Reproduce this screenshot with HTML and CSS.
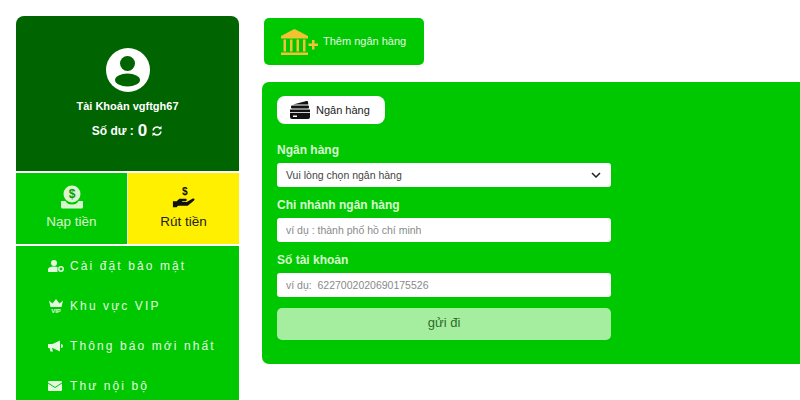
FILE: index.html
```html
<!DOCTYPE html>
<html lang="vi">
<head>
    <meta charset="UTF-8">
    <meta name="viewport" content="width=device-width, initial-scale=1.0">
    <title>Ngân hàng</title>
    <link rel="stylesheet" href="styles.css">
</head>
<body>
    <div class="page">
        <aside class="sidebar">
            <div class="profile">
                <svg class="avatar" viewBox="0 0 44 44">
                    <circle cx="22" cy="22" r="22" fill="#fff"/>
                    <circle cx="21.500" cy="15.500" r="7.500" fill="#006400"/>
                    <ellipse cx="21.500" cy="32" rx="12.500" ry="6.500" fill="#006400"/>
                </svg>
                <div class="account">Tài Khoản vgftgh67</div>
                <div class="balance">
                    <span>Số dư :</span>
                    <span class="amount">0</span>
                    <svg class="refresh" viewBox="0 0 12 12">
                        <path d="M2 5.500C2.500 3.300 4.200 2 6.200 2c1.200 0 2.200.5 3 1.300M10 6.500C9.500 8.700 7.800 10 5.800 10c-1.200 0-2.200-.5-3-1.300" fill="none" stroke="#fff" stroke-width="1.500"/>
                        <path d="M10.500 .8v3.400H7.100zM1.500 11.200V7.800h3.400z" fill="#fff"/>
                    </svg>
                </div>
            </div>
            <div class="tiles">
                <a href="#none" class="tile tile-in">
                    <svg class="tile-icon" viewBox="0 0 24 24">
                        <circle cx="12" cy="9" r="8.500" fill="#d8f5d0"/>
                        <text x="12" y="13" class="coin">$</text>
                        <path d="M1 16h4.500c1 2.500 3.500 3.500 6.500 3.500s5.500-1 6.500-3.500H23v6a1.500 1.500 0 0 1-1.500 1.500h-19A1.500 1.500 0 0 1 1 22z" fill="#d8f5d0"/>
                    </svg>
                    <span>Nạp tiền</span>
                </a>
                <a href="#none" class="tile tile-out">
                    <svg class="tile-icon" viewBox="0 0 26 24">
                        <text x="14" y="9.500" class="dollar">$</text>
                        <path d="M1 16.500h4l3-2.500h6.500c1 0 1.500.6 1.500 1.300s-.6 1.200-1.500 1.200h-3.500v.8h5l6-3.300c1-.5 2-.3 2.300.3.300.6 0 1.200-.7 1.700L17 21.500H6.500L5 23H1z" fill="#111"/>
                    </svg>
                    <span>Rút tiền</span>
                </a>
            </div>
            <ul class="menu">
                <li>
                    <svg class="menu-icon" viewBox="0 0 16 12">
                        <circle cx="6" cy="3" r="3" fill="#e4f8e0"/>
                        <path d="M0 12V9.500C0 7.500 2 6.500 6 6.500c1.500 0 2.700.2 3.500.5v5z" fill="#e4f8e0"/>
                        <circle cx="13" cy="9" r="2.200" fill="none" stroke="#e4f8e0" stroke-width="1.500"/>
                    </svg>
                    <span>Cài đặt bảo mật</span>
                </li>
                <li>
                    <svg class="menu-icon" viewBox="0 0 16 14">
                        <path d="M1 1.500l3.500 3L8 0l3.500 4.500 3.500-3L13.500 8h-11z" fill="#e4f8e0"/>
                        <text x="8" y="14" class="vip">VIP</text>
                    </svg>
                    <span>Khu vực VIP</span>
                </li>
                <li>
                    <svg class="menu-icon" viewBox="0 0 16 12">
                        <path d="M0 4h4.500L12 .5v11L4.500 8H4l1 3.500H2.500L1.500 8H0z" fill="#e4f8e0"/>
                        <path d="M13 4a2 2 0 0 1 0 4z" fill="#e4f8e0"/>
                    </svg>
                    <span>Thông báo mới nhất</span>
                </li>
                <li>
                    <svg class="menu-icon" viewBox="0 0 16 12">
                        <rect y="1" width="14" height="10" rx="1" fill="#e4f8e0"/>
                        <path d="M0 3l7 4.500L14 3" fill="none" stroke="#00c800" stroke-width="1"/>
                    </svg>
                    <span>Thư nội bộ</span>
                </li>
            </ul>
        </aside>

        <main class="content">
            <a href="#none" class="add-bank">
                <svg class="bank-icon" viewBox="0 0 37 26">
                    <path d="M13.500 0L27 7v2.500H0V7z" fill="#f2c230"/>
                    <path d="M2.500 10.500h2.500v12H2.500zM9 10.500h2.500v12H9zM15.500 10.500H18v12h-2.500zM22 10.500h2.500v12H22zM0 23.500h27V26H0z" fill="#f2c230"/>
                    <path d="M27.500 14.500H37v2.500h-9.500zM31 11h2.500v9.500H31z" fill="#f2c230"/>
                </svg>
                <span class="add-text">Thêm ngân hàng</span>
            </a>

            <section class="panel">
                <div class="tab">
                    <svg class="card-icon" viewBox="0 0 20 18">
                        <path d="M3 3.500L16.500 0c.8-.2 1.400.2 1.500 1l.3 2.500z" fill="#111"/>
                        <rect x="1" y="4.500" width="18" height="3" rx="1" fill="#111"/>
                        <path d="M0 8.500h20v7.500a2 2 0 0 1-2 2H2a2 2 0 0 1-2-2z" fill="#111"/>
                        <rect x="0" y="11" width="20" height=".8" fill="#fff"/>
                        <rect x="3" y="14.500" width="4" height="1.500" fill="#fff"/>
                    </svg>
                    <span>Ngân hàng</span>
                </div>
                <form class="form">
                    <label class="field">
                        <span class="field-label">Ngân hàng</span>
                        <span class="select">
                            <span>Vui lòng chọn ngân hàng</span>
                            <svg class="chevron" viewBox="0 0 10 6">
                                <path d="M1 1l4 4 4-4" fill="none" stroke="#222" stroke-width="1.500"/>
                            </svg>
                        </span>
                    </label>
                    <label class="field">
                        <span class="field-label">Chi nhánh ngân hàng</span>
                        <input type="text" placeholder="ví dụ : thành phố hồ chí minh">
                    </label>
                    <label class="field">
                        <span class="field-label">Số tài khoản</span>
                        <input type="text" placeholder="ví dụ:  6227002020690175526">
                    </label>
                    <button type="button" class="submit">gửi đi</button>
                </form>
            </section>
        </main>
    </div>
</body>
</html>
```

FILE: styles.css
```css
*{
    padding: 0;
    margin: 0;
    box-sizing: border-box;
}
html,body{
    height: 400px;
    overflow: hidden;
    background: #fff;
}
body{
    font-family: "Liberation Sans", Arial, sans-serif;
}
.page{
    display: flex;
    align-items: flex-start;
    padding: 16px 0 0 16px;
    gap: 23px;
}

/* left column */
.sidebar{
    width: 223px;
    flex: none;
}
.profile{
    height: 155px;
    padding-top: 32px;
    background: #006400;
    border-radius: 8px 8px 0 0;
    color: #fff;
    display: flex;
    flex-direction: column;
    align-items: center;
}
.avatar{
    width: 44px;
    height: 44px;
}
.account{
    margin-top: 7px;
    font-size: 11px;
    font-weight: bold;
    line-height: 14px;
}
.balance{
    margin-top: 9px;
    font-size: 12px;
    font-weight: bold;
    line-height: 18px;
    display: flex;
    align-items: center;
    gap: 4px;
}
.amount{
    font-size: 17px;
}
.refresh{
    width: 12px;
    height: 12px;
}
.tiles{
    display: flex;
    margin-top: 2px;
    height: 71px;
}
.tile{
    display: flex;
    flex-direction: column;
    align-items: center;
    padding-top: 12px;
    font-size: 13.500px;
    text-decoration: none;
}
.tile span{
    margin-top: 5px;
    line-height: 16px;
}
.tile-icon{
    width: 24px;
    height: 24px;
}
.tile-in{
    width: 112px;
    background: #00c800;
    color: #d8f5d0;
    border-right: 1px solid #e8f5e0;
}
.tile-out{
    width: 111px;
    background: #fff000;
    color: #222;
}
.coin{
    font-size: 12px;
    font-weight: bold;
    text-anchor: middle;
    fill: #00a000;
}
.dollar{
    font-size: 11px;
    font-weight: bold;
    text-anchor: middle;
    fill: #111;
}
.menu{
    list-style: none;
    margin-top: 2px;
    height: 160px;
    background: #00c800;
    padding-left: 32px;
}
.menu li{
    height: 40px;
    display: flex;
    align-items: center;
    gap: 6px;
    color: #e4f8e0;
    font-size: 12px;
    letter-spacing: 2.100px;
}
.menu-icon{
    width: 16px;
    height: 14px;
    flex: none;
}
.vip{
    font-size: 6px;
    font-weight: bold;
    text-anchor: middle;
    fill: #e4f8e0;
    letter-spacing: 0;
}

/* right column */
.content{
    flex: 1;
    min-width: 0;
}
.add-bank{
    display: flex;
    align-items: center;
    width: 160px;
    height: 47px;
    margin: 2px 0 0 2px;
    padding-left: 17px;
    gap: 5px;
    background: #00c800;
    border-radius: 5px;
    color: #e4f8e0;
    font-size: 11px;
    text-decoration: none;
}
.add-text{
    padding-bottom: 2px;
}
.bank-icon{
    width: 37px;
    height: 26px;
}
.panel{
    margin-top: 17px;
    height: 282px;
    padding: 14px 0 0 15px;
    background: #00c800;
    border-radius: 7px 0 0 7px;
}
.tab{
    display: flex;
    align-items: center;
    gap: 6px;
    width: 108px;
    height: 28px;
    padding-left: 13px;
    background: #fff;
    border-radius: 8px;
    color: #222;
    font-size: 11px;
}
.card-icon{
    width: 20px;
    height: 18px;
}
.form{
    width: 334px;
    margin-top: 19px;
}
.field{
    display: block;
    margin-bottom: 11px;
}
.field-label{
    display: block;
    height: 20px;
    color: #d8f8d0;
    font-size: 12px;
    font-weight: bold;
    line-height: 14px;
}
.select,input{
    display: flex;
    align-items: center;
    justify-content: space-between;
    width: 100%;
    height: 24px;
    padding: 0 10px 0 9px;
    background: #fff;
    border: 0 none;
    border-radius: 3px;
    font-family: "Liberation Sans", Arial, sans-serif;
    font-size: 10.500px;
    color: #444;
}
input::placeholder{
    color: #8a8a8a;
    opacity: 1;
}
.chevron{
    width: 10px;
    height: 6px;
}
.submit{
    display: block;
    width: 100%;
    height: 32px;
    padding-bottom: 3px;
    background: #a6ee9f;
    border: 0 none;
    border-radius: 5px;
    color: #2c6b2c;
    font-family: "Liberation Sans", Arial, sans-serif;
    font-size: 13px;
}
```
